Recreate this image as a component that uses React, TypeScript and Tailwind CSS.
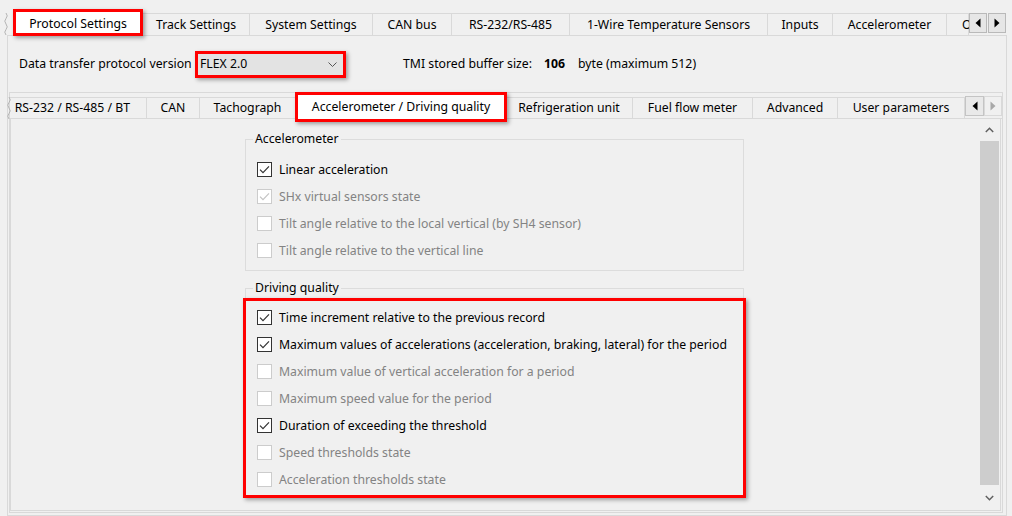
import React from "react";

type TabDef = { label: string; w: string; sel?: boolean; extra?: string };

const outerTabs: TabDef[] = [
  { label: "Protocol Settings", w: "w-[130px]", sel: true },
  { label: "Track Settings", w: "w-[107px]" },
  { label: "System Settings", w: "w-[123px]" },
  { label: "CAN bus", w: "w-[79px]" },
  { label: "RS-232/RS-485", w: "w-[118px]" },
  { label: "1-Wire Temperature Sensors", w: "w-[198px]" },
  { label: "Inputs", w: "w-[65px]" },
  { label: "Accelerometer", w: "w-[114px]" },
  { label: "O", w: "w-[22px]", extra: "justify-start pl-[15px]" },
];

const innerTabs: TabDef[] = [
  { label: "RS-232 / RS-485 / BT", w: "w-[160px] ml-[-23px]", extra: "justify-end pr-[16px]" },
  { label: "CAN", w: "w-[53px]" },
  { label: "Tachograph", w: "w-[96px]" },
  { label: "Accelerometer / Driving quality", w: "w-[210px]", sel: true },
  { label: "Refrigeration unit", w: "w-[127px]" },
  { label: "Fuel flow meter", w: "w-[120px]" },
  { label: "Advanced", w: "w-[85px]" },
  { label: "User parameters", w: "w-[127px]" },
];

function RedBox({ pos }: { pos: string }) {
  return (
    <div
      className={`pointer-events-none absolute z-20 border-[3px] border-[#ff0000] shadow-[2px_2px_4px_rgba(0,0,0,0.35)] ${pos}`}
    />
  );
}

function Squiggle({ pos }: { pos: string }) {
  return (
    <svg className={`absolute ${pos}`} width="6" height="22" viewBox="0 0 6 22">
      <path
        d="M3 0 Q5.5 3 3 5.5 Q0.5 8 3 11 Q5.5 14 3 16.5 Q0.5 19 3 22"
        fill="none"
        stroke="#b4b4b4"
        strokeWidth="1"
      />
    </svg>
  );
}

function Tri({ dir, color }: { dir: "l" | "r"; color: string }) {
  return (
    <svg width="6" height="10" viewBox="0 0 6 10">
      <polygon points={dir === "l" ? "5.5,0.5 5.5,9.5 0.5,5" : "0.5,0.5 0.5,9.5 5.5,5"} fill={color} />
    </svg>
  );
}

function CheckRow({ label, checked, disabled }: { label: string; checked?: boolean; disabled?: boolean }) {
  return (
    <div className="flex h-[27px] items-center">
      <span
        className={`flex h-[15px] w-[15px] flex-none items-center justify-center border bg-white ${
          disabled ? "border-[#cccccc]" : "border-[#333333]"
        }`}
      >
        {checked && (
          <svg width="11" height="9" viewBox="0 0 11 9">
            <path
              d="M1 4.6 L4 7.6 L10 1.3"
              fill="none"
              stroke={disabled ? "#c4c4c4" : "#333333"}
              strokeWidth="1.2"
            />
          </svg>
        )}
      </span>
      <span className={`ml-[7px] whitespace-nowrap ${disabled ? "text-[#838383]" : "text-black"}`}>{label}</span>
    </div>
  );
}

export default function App() {
  return (
    <div className="relative h-[516px] w-[1012px] overflow-hidden bg-[#f0f0f0] font-['Noto_Sans',sans-serif] text-[12.25px] leading-[16px] text-black">
      <div className="ml-[7px] w-[1000px]">
        {/* outer tab bar */}
        <div className="relative flex h-[36px] items-end border-b border-[#d9d9d9]">
          <Squiggle pos="left-[-4px] top-[13px]" />
          <div className="flex h-full min-w-0 flex-1 items-end overflow-x-clip pl-[6px]">
            {outerTabs.map((t) =>
              t.sel ? (
                <div
                  key={t.label}
                  className={`relative z-10 -mb-px flex h-[26px] flex-none items-center justify-center whitespace-nowrap border-x border-t border-[#d9d9d9] bg-white pt-[1px] ${t.w}`}
                >
                  {t.label}
                  <RedBox pos="left-[-1px] right-[-1px] top-[-2px] bottom-0" />
                </div>
              ) : (
                <div
                  key={t.label}
                  className={`flex h-[22px] flex-none items-center whitespace-nowrap border-r border-t border-[#d9d9d9] bg-[#f0f0f0] ${
                    t.extra ?? "justify-center"
                  } ${t.w}`}
                >
                  {t.label}
                </div>
              )
            )}
          </div>
          <div className="flex flex-none gap-[1px] pb-[2px] pr-[1px]">
            <div className="flex h-[20px] w-[18px] items-center justify-center border border-[#b9b9b9] bg-[#e6e6e6]">
              <Tri dir="l" color="#000" />
            </div>
            <div className="flex h-[20px] w-[18px] items-center justify-center border border-[#b9b9b9] bg-[#e6e6e6]">
              <Tri dir="r" color="#000" />
            </div>
          </div>
        </div>

        {/* outer pane */}
        <div className="flex h-[480px] flex-col border-x border-b border-[#d9d9d9]">
          <div className="flex h-[56px] flex-none items-center pl-[11px]">
            <span className="w-[178px] whitespace-nowrap">Data transfer protocol version</span>
            <div className="relative flex h-[23px] w-[147px] items-center justify-between border border-[#adadad] bg-[#e3e3e3] pl-[2px] pr-[6px]">
              <span>FLEX 2.0</span>
              <svg width="9" height="5" viewBox="0 0 9 5">
                <path d="M0.5 0.5 L4.5 4.5 L8.5 0.5" fill="none" stroke="#555" strokeWidth="1" />
              </svg>
              <RedBox pos="-left-[3px] -right-[3px] -top-[3px] -bottom-[3px]" />
            </div>
            <span className="ml-[59px] w-[141px] whitespace-nowrap">TMI stored buffer size:</span>
            <span className="w-[34px] font-bold">106</span>
            <span className="whitespace-nowrap">byte (maximum 512)</span>
          </div>

          {/* frame containing inner tabs */}
          <div className="ml-[1px] mr-[3px] flex h-[421px] flex-col border border-[#d9d9d9]">
            <div className="relative flex h-[26px] flex-none items-end border-b border-[#d9d9d9]">
              <Squiggle pos="left-[-4px] top-[4px]" />
              <div className="flex h-full min-w-0 flex-1 items-end overflow-x-clip">
                {innerTabs.map((t) =>
                  t.sel ? (
                    <div
                      key={t.label}
                      className={`relative z-10 -mb-px flex h-[25px] flex-none items-center justify-center whitespace-nowrap border-x border-t border-[#d9d9d9] bg-white ${t.w}`}
                    >
                      {t.label}
                      <RedBox pos="-left-[2px] -right-[2px] -top-[3px] -bottom-[3px]" />
                    </div>
                  ) : (
                    <div
                      key={t.label}
                      className={`flex h-[21px] flex-none items-center whitespace-nowrap border-r border-t border-[#d9d9d9] bg-[#f0f0f0] ${
                        t.extra ?? "justify-center"
                      } ${t.w}`}
                    >
                      {t.label}
                    </div>
                  )
                )}
              </div>
              <div className="mb-[2px] flex flex-none">
                <div className="flex h-[20px] w-[19px] items-center justify-center border border-[#c4c4c4] bg-[#e9e9e9]">
                  <Tri dir="l" color="#000" />
                </div>
                <div className="flex h-[20px] w-[18px] items-center justify-center border border-[#d9d9d9] bg-[#f0f0f0]">
                  <Tri dir="r" color="#a8a8a8" />
                </div>
              </div>
            </div>

            {/* inner pane */}
            <div className="mb-[1px] mr-[1px] flex h-[392px] flex-none border-x border-b border-[#d9d9d9]">
              <div className="flex min-w-0 flex-1 flex-col pl-[234px] pt-[12px]">
                <fieldset className="w-[499px] border border-[#dcdcdc] pb-[6px]">
                  <legend className="ml-[7px] px-[2px]">Accelerometer</legend>
                  <div className="pl-[11px] pt-[9px]">
                    <CheckRow label="Linear acceleration" checked />
                    <CheckRow label="SHx virtual sensors state" checked disabled />
                    <CheckRow label="Tilt angle relative to the local vertical (by SH4 sensor)" disabled />
                    <CheckRow label="Tilt angle relative to the vertical line" disabled />
                  </div>
                </fieldset>
                <fieldset className="mt-[9px] w-[499px] border border-[#dcdcdc] pb-[3px]">
                  <legend className="ml-[7px] px-[2px]">Driving quality</legend>
                  <div className="relative pl-[11px] pt-[8px]">
                    <CheckRow label="Time increment relative to the previous record" checked />
                    <CheckRow label="Maximum values of accelerations (acceleration, braking, lateral) for the period" checked />
                    <CheckRow label="Maximum value of vertical acceleration for a period" disabled />
                    <CheckRow label="Maximum speed value for the period" disabled />
                    <CheckRow label="Duration of exceeding the threshold" checked />
                    <CheckRow label="Speed thresholds state" disabled />
                    <CheckRow label="Acceleration thresholds state" disabled />
                    <RedBox pos="-left-[3px] -right-[3px] top-[2px] -bottom-[5px]" />
                  </div>
                </fieldset>
              </div>

              {/* scrollbar */}
              <div className="mr-[1px] flex w-[19px] flex-none flex-col">
                <div className="flex h-[22px] flex-none items-center justify-center">
                  <svg width="9" height="6" viewBox="0 0 9 6">
                    <path d="M0.8 5 L4.5 1.3 L8.2 5" fill="none" stroke="#606060" strokeWidth="1.5" />
                  </svg>
                </div>
                <div className="flex-1 bg-[#cdcdcd]" />
                <div className="mt-[1px] flex h-[24px] flex-none items-center justify-center pb-[1px]">
                  <svg width="9" height="6" viewBox="0 0 9 6">
                    <path d="M0.8 1 L4.5 4.7 L8.2 1" fill="none" stroke="#606060" strokeWidth="1.5" />
                  </svg>
                </div>
              </div>
            </div>
          </div>
        </div>
      </div>
    </div>
  );
}
